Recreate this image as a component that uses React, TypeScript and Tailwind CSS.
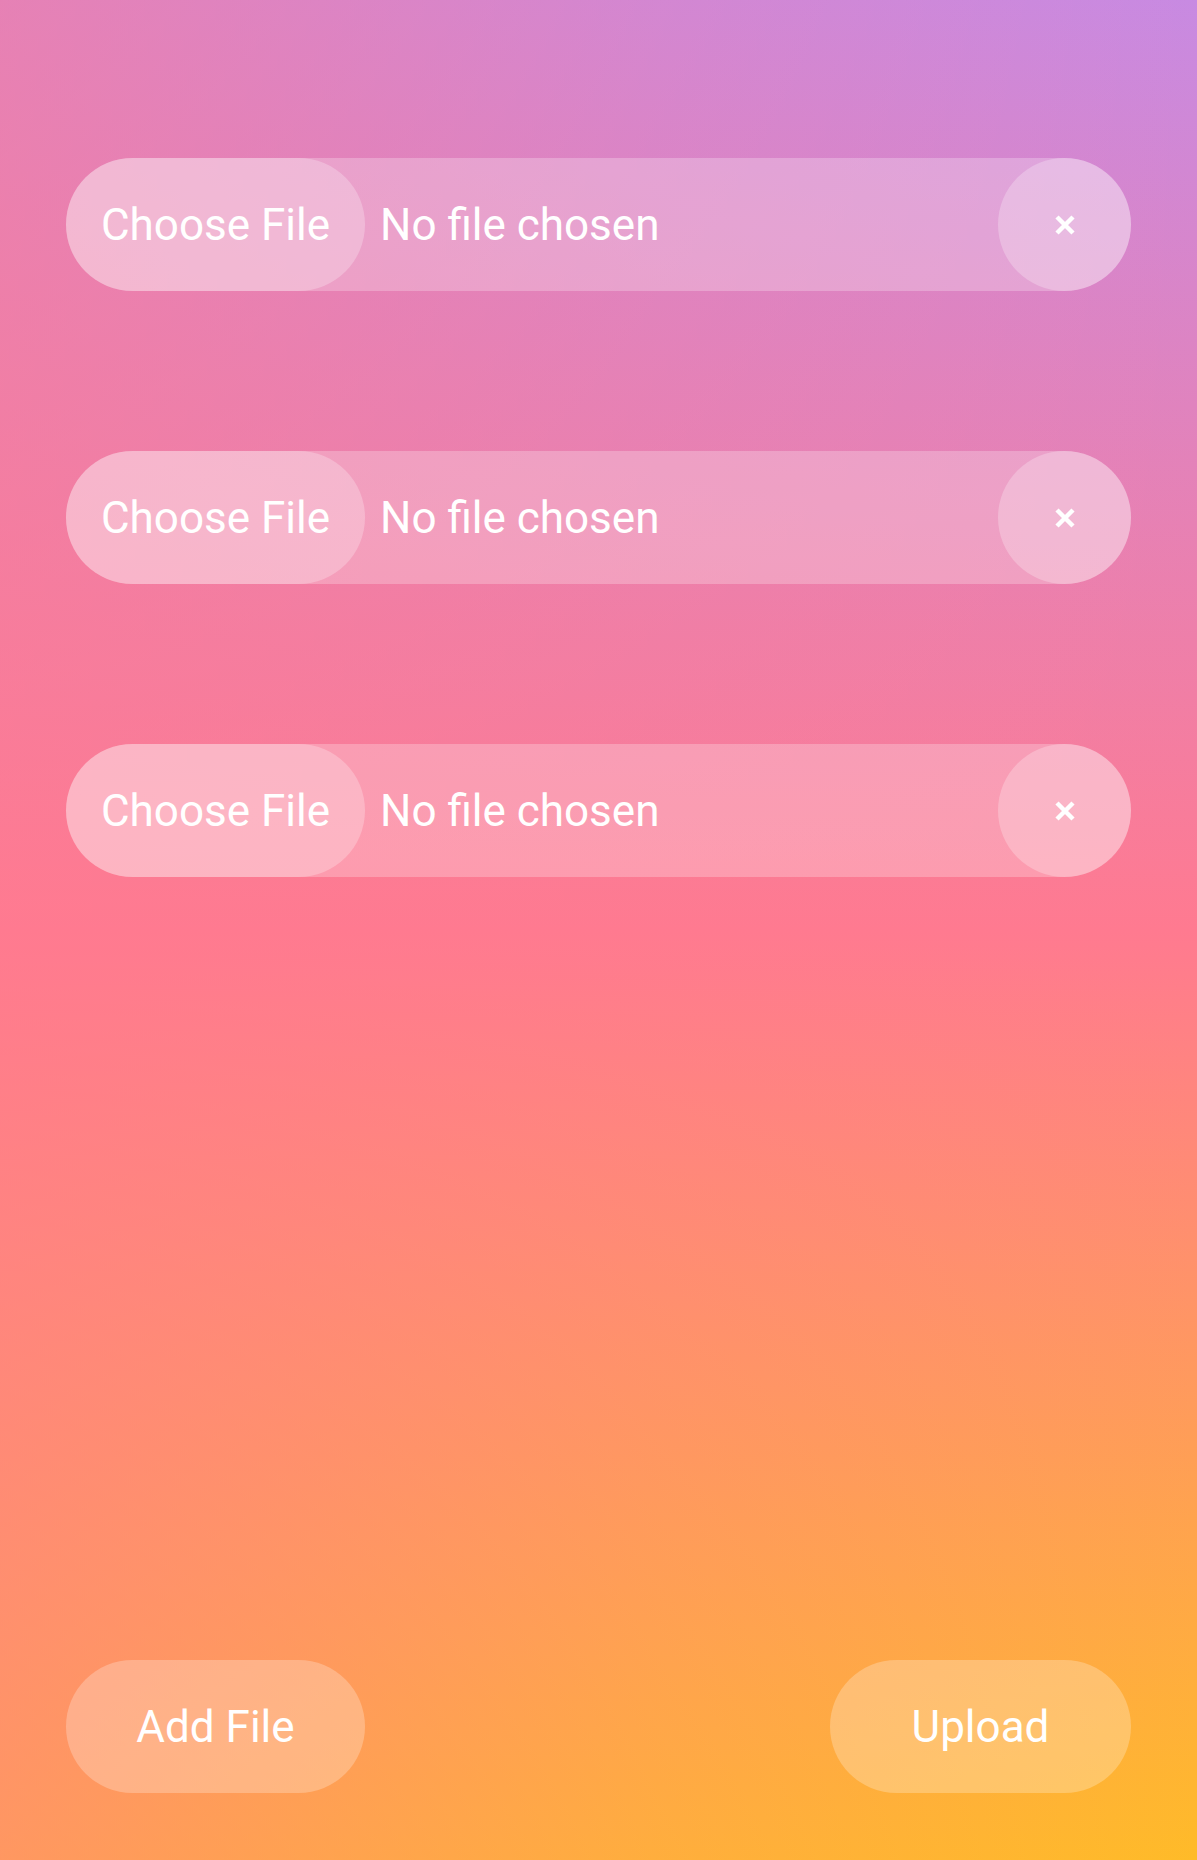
import React, { useState } from 'react';

interface FileRowProps {
  fileName?: string;
  onPick: (name?: string) => void;
  onRemove: () => void;
}

const CloseIcon = () => (
  <svg width="22" height="22" viewBox="0 0 22 22" fill="none" stroke="currentColor" strokeWidth="4.5">
    <path d="M3 3l16 16M19 3L3 19" />
  </svg>
);

const FileRow: React.FC<FileRowProps> = ({ fileName, onPick, onRemove }) => {
  return (
    <div className="flex items-center h-[133px] rounded-full bg-white/25">
      <label className="h-full w-[299px] shrink-0 flex items-center justify-center rounded-full bg-white/25 cursor-pointer">
        Choose File
        <input
          type="file"
          className="hidden"
          onChange={(e) => onPick(e.target.files?.[0]?.name)}
        />
      </label>
      <span className="flex-1 min-w-0 pl-[15px] whitespace-nowrap leading-normal">{fileName || 'No file chosen'}</span>
      <button
        type="button"
        onClick={onRemove}
        className="h-[133px] w-[133px] shrink-0 flex items-center justify-center rounded-full bg-white/25"
      >
        <CloseIcon />
      </button>
    </div>
  );
};

export default function App() {
  const [files, setFiles] = useState<(string | undefined)[]>([undefined, undefined, undefined]);

  const addFile = () => setFiles((f) => [...f, undefined]);
  const removeFile = (i: number) => setFiles((f) => f.filter((_, idx) => idx !== i));
  const pickFile = (i: number, name?: string) =>
    setFiles((f) => f.map((v, idx) => (idx === i ? name : v)));

  return (
    <div className="min-h-[1860px] flex flex-col justify-between px-[66px] pt-[158px] pb-[67px] text-white text-[44px] leading-none font-['Roboto',sans-serif] bg-[linear-gradient(to_right,rgba(255,122,144,0.55),rgba(255,122,144,0.2)_55%,rgba(255,122,144,0)),linear-gradient(to_bottom,#c88ae2,#ff7a90_50%,#ffbb28)]">
      <div className="flex flex-col gap-[160px]">
        {files.map((name, i) => (
          <FileRow
            key={i}
            fileName={name}
            onPick={(n) => pickFile(i, n)}
            onRemove={() => removeFile(i)}
          />
        ))}
      </div>

      <div className="flex justify-between">
        <button
          type="button"
          onClick={addFile}
          className="h-[133px] w-[299px] rounded-full bg-white/25"
        >
          Add File
        </button>
        <button type="button" className="h-[133px] w-[301px] rounded-full bg-white/25">
          Upload
        </button>
      </div>
    </div>
  );
}
